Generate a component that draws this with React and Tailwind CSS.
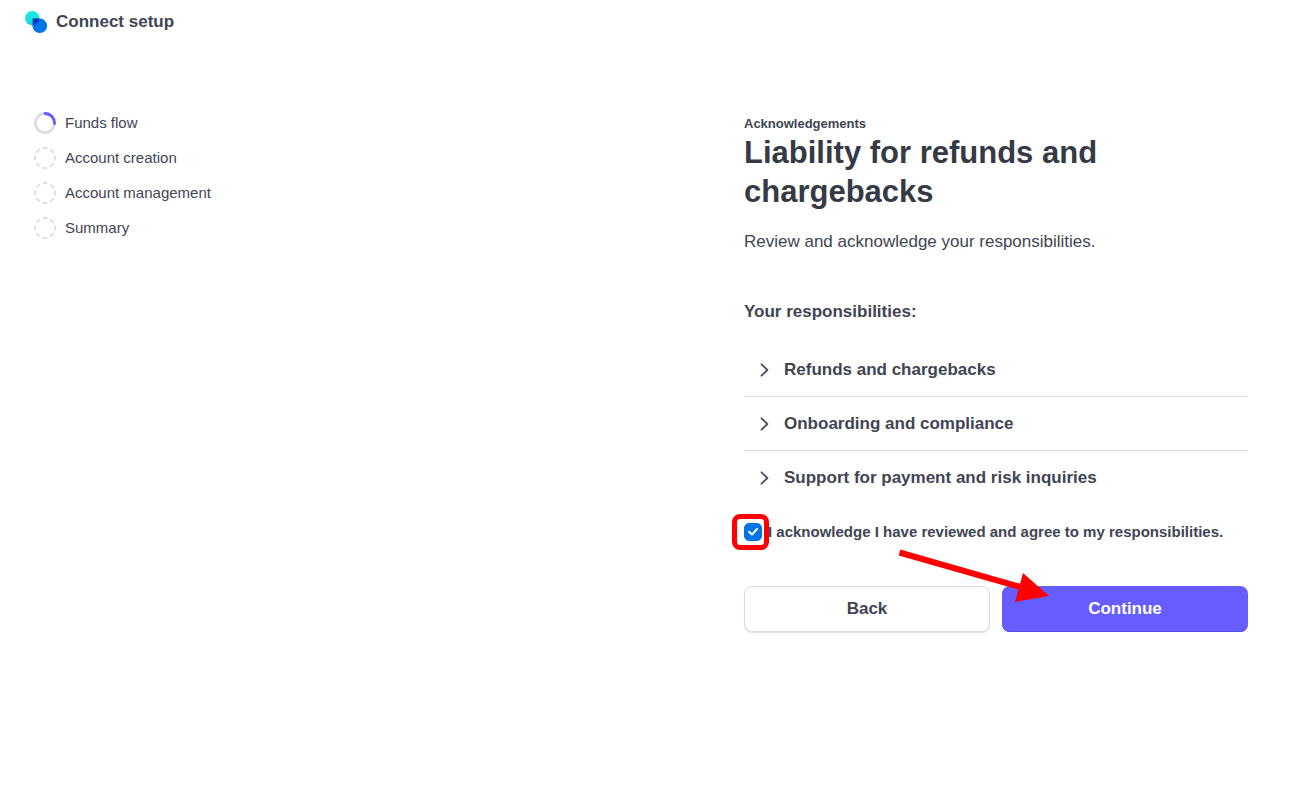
import { useState } from "react";
import clsx from "clsx";

const steps = [
  { label: "Funds flow", active: true },
  { label: "Account creation" },
  { label: "Account management" },
  { label: "Summary" },
];

const responsibilities = [
  "Refunds and chargebacks",
  "Onboarding and compliance",
  "Support for payment and risk inquiries",
];

function ConnectLogo() {
  return (
    <svg width="24" height="24" viewBox="0 0 24 24" aria-hidden="true">
      <defs>
        <linearGradient id="teal" x1="0" y1="0" x2="0" y2="1">
          <stop offset="0" stopColor="#11efe3" />
          <stop offset="1" stopColor="#21cfe0" />
        </linearGradient>
        <linearGradient id="overlap" x1="0" y1="0" x2="0.6" y2="1">
          <stop offset="0" stopColor="#00299c" />
          <stop offset="1" stopColor="#0048e5" />
        </linearGradient>
      </defs>
      <circle cx="8.2" cy="8.2" r="7.2" fill="url(#teal)" />
      <circle cx="15.8" cy="15.8" r="7.3" fill="#0073e6" />
      <path d="M8.6 8.6H15.4C15.4 11.6 14.2 14.4 8.6 15.4Z" fill="url(#overlap)" />
    </svg>
  );
}

function StepIcon({ active }) {
  if (active) {
    return (
      <svg width="22" height="22" viewBox="0 0 22 22" fill="none" aria-hidden="true">
        <circle cx="11" cy="11" r="9.5" stroke="#d8dee4" strokeWidth="2.8" />
        <path d="M11 1.5A9.5 9.5 0 0 1 20.5 11.5" stroke="#675dff" strokeWidth="2.8" strokeLinecap="round" />
      </svg>
    );
  }
  return (
    <svg width="22" height="22" viewBox="0 0 22 22" fill="none" aria-hidden="true">
      <circle
        cx="11"
        cy="11"
        r="10"
        stroke="#d8dee4"
        strokeWidth="1.8"
        strokeDasharray="4.85 3"
        strokeDashoffset="2.4"
        transform="rotate(-90 11 11)"
      />
    </svg>
  );
}

function Steps() {
  return (
    <nav aria-label="Setup steps">
      <ol className="flex flex-col gap-[11px]">
        {steps.map((step) => (
          <li
            key={step.label}
            aria-current={step.active ? "step" : undefined}
            className="flex items-center gap-[9px] text-[15px] leading-6"
          >
            <StepIcon active={step.active} />
            {step.label}
          </li>
        ))}
      </ol>
    </nav>
  );
}

function Responsibilities() {
  const [open, setOpen] = useState(null);

  return (
    <ul className="mt-[18px]">
      {responsibilities.map((title, i) => (
        <li key={title} className={clsx(i < responsibilities.length - 1 && "border-b border-[#d8dee4]")}>
          <button
            type="button"
            aria-expanded={open === i}
            onClick={() => setOpen(open === i ? null : i)}
            className="flex h-[53px] w-full items-center gap-[14px] pl-[14px] text-left text-[17px] font-bold"
          >
            <svg
              width="12"
              height="14"
              viewBox="0 0 12 14"
              fill="none"
              aria-hidden="true"
              className={clsx(open === i && "rotate-90")}
            >
              <path d="M3.5 1.3L9.4 7L3.5 12.7" stroke="#474e5a" strokeWidth="1.8" strokeLinecap="round" strokeLinejoin="round" />
            </svg>
            {title}
          </button>
        </li>
      ))}
    </ul>
  );
}

function Acknowledge() {
  const [checked, setChecked] = useState(true);

  return (
    <div className="mt-4 flex items-center gap-[6px]">
      <span className="relative flex shrink-0">
        <input
          id="acknowledge"
          type="checkbox"
          checked={checked}
          onChange={(e) => setChecked(e.target.checked)}
          className="size-[18px] appearance-none rounded-[5px] border border-[#d8dee4] bg-white checked:border-[#0073e6] checked:bg-[#0073e6]"
        />
        {checked && (
          <svg
            width="18"
            height="18"
            viewBox="0 0 18 18"
            fill="none"
            aria-hidden="true"
            className="pointer-events-none absolute inset-0"
          >
            <path d="M5.1 8.8L8 11.6L13 6" stroke="white" strokeWidth="2.1" strokeLinecap="round" strokeLinejoin="round" />
          </svg>
        )}
        <span className="pointer-events-none absolute -inset-y-[9px] -right-[7px] -left-3 z-10 rounded-lg border-[5px] border-[#ff0000]" />
      </span>
      <label htmlFor="acknowledge" className="text-[15px] leading-6 font-bold">
        I acknowledge I have reviewed and agree to my responsibilities.
      </label>
    </div>
  );
}

function Actions() {
  return (
    <div className="relative mt-[42px] grid grid-cols-2 gap-3">
      <button
        type="button"
        className="h-[46px] rounded-lg border border-[#d8dee4] bg-white text-[17px] font-bold shadow-[0_1px_1px_#0000001f]"
      >
        Back
      </button>
      <button
        type="button"
        className="h-[46px] rounded-lg bg-[#675dff] text-[17px] font-bold text-white shadow-[inset_0_-1px_0_#564bdc]"
      >
        Continue
      </button>
      <svg
        width="160"
        height="60"
        viewBox="0 0 160 60"
        aria-hidden="true"
        className="pointer-events-none absolute -top-10 left-[150px]"
      >
        <path d="M5.5 6.5L130 42" stroke="#ff0000" strokeWidth="6" />
        <path d="M129 27L155 50L121 56Z" fill="#ff0000" />
      </svg>
    </div>
  );
}

export default function App() {
  return (
    <div className='min-h-screen bg-white font-["Liberation_Sans",Arial,sans-serif] text-[#414552]'>
      <header className="flex items-center gap-2 px-6 pt-[10px]">
        <ConnectLogo />
        <span className="text-[17px] leading-6 font-bold">Connect setup</span>
      </header>
      <div className="flex flex-wrap items-start justify-between gap-10 pt-[77px] pr-16 pb-16 pl-[34px]">
        <Steps />
        <main className="w-full max-w-[504px] pt-1">
          <p className="text-[13px] leading-[18px] font-bold">Acknowledgements</p>
          <h1 className="text-[31px] leading-[39px] font-bold text-[#353a44]">Liability for refunds and chargebacks</h1>
          <p className="mt-[18px] text-[17px] leading-[26px]">Review and acknowledge your responsibilities.</p>
          <h2 className="mt-11 text-[17px] leading-[26px] font-bold">Your responsibilities:</h2>
          <Responsibilities />
          <Acknowledge />
          <Actions />
        </main>
      </div>
    </div>
  );
}
